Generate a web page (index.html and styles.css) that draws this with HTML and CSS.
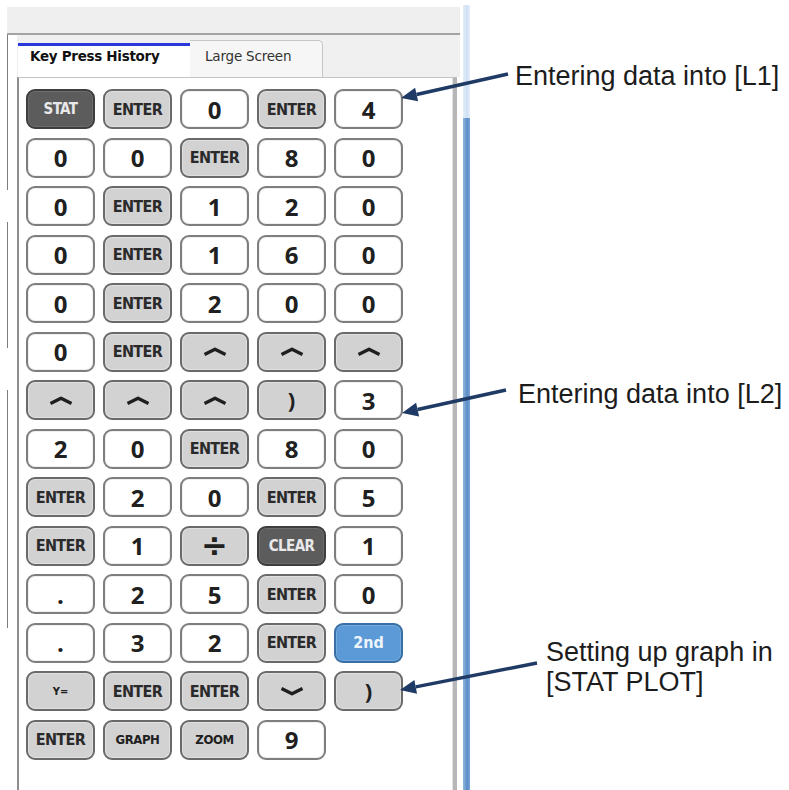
FILE: index.html
```html
<!DOCTYPE html>
<html>
<head>
<meta charset="utf-8">
<link rel="stylesheet" href="styles.css">
</head>
<body>
<div class="page">
  <div class="frame">
    <div class="topbar"></div>
    <div class="body">
      <div class="edge">
        <div class="seg seg-a"></div>
        <div class="gap gap-a"></div>
        <div class="seg seg-b"></div>
        <div class="gap gap-b"></div>
        <div class="seg seg-c"></div>
      </div>
      <div class="main">
        <div class="tabs">
          <div class="tab active">Key Press History</div>
          <div class="tab">Large Screen</div>
        </div>
        <div class="panel">
          <div class="keys">
            <div class="key dark lbl">STAT</div>
            <div class="key gray lbl">ENTER</div>
            <div class="key num">0</div>
            <div class="key gray lbl">ENTER</div>
            <div class="key num">4</div>

            <div class="key num">0</div>
            <div class="key num">0</div>
            <div class="key gray lbl">ENTER</div>
            <div class="key num">8</div>
            <div class="key num">0</div>

            <div class="key num">0</div>
            <div class="key gray lbl">ENTER</div>
            <div class="key num">1</div>
            <div class="key num">2</div>
            <div class="key num">0</div>

            <div class="key num">0</div>
            <div class="key gray lbl">ENTER</div>
            <div class="key num">1</div>
            <div class="key num">6</div>
            <div class="key num">0</div>

            <div class="key num">0</div>
            <div class="key gray lbl">ENTER</div>
            <div class="key num">2</div>
            <div class="key num">0</div>
            <div class="key num">0</div>

            <div class="key num">0</div>
            <div class="key gray lbl">ENTER</div>
            <div class="key gray"><svg class="chev" viewBox="0 0 24 9"><path d="M1.5 7.5 L12 2.2 L22.5 7.5"/></svg></div>
            <div class="key gray"><svg class="chev" viewBox="0 0 24 9"><path d="M1.5 7.5 L12 2.2 L22.5 7.5"/></svg></div>
            <div class="key gray"><svg class="chev" viewBox="0 0 24 9"><path d="M1.5 7.5 L12 2.2 L22.5 7.5"/></svg></div>

            <div class="key gray"><svg class="chev" viewBox="0 0 24 9"><path d="M1.5 7.5 L12 2.2 L22.5 7.5"/></svg></div>
            <div class="key gray"><svg class="chev" viewBox="0 0 24 9"><path d="M1.5 7.5 L12 2.2 L22.5 7.5"/></svg></div>
            <div class="key gray"><svg class="chev" viewBox="0 0 24 9"><path d="M1.5 7.5 L12 2.2 L22.5 7.5"/></svg></div>
            <div class="key gray paren">)</div>
            <div class="key num">3</div>

            <div class="key num">2</div>
            <div class="key num">0</div>
            <div class="key gray lbl">ENTER</div>
            <div class="key num">8</div>
            <div class="key num">0</div>

            <div class="key gray lbl">ENTER</div>
            <div class="key num">2</div>
            <div class="key num">0</div>
            <div class="key gray lbl">ENTER</div>
            <div class="key num">5</div>

            <div class="key gray lbl">ENTER</div>
            <div class="key num">1</div>
            <div class="key gray div">÷</div>
            <div class="key dark lbl">CLEAR</div>
            <div class="key num">1</div>

            <div class="key num">.</div>
            <div class="key num">2</div>
            <div class="key num">5</div>
            <div class="key gray lbl">ENTER</div>
            <div class="key num">0</div>

            <div class="key num">.</div>
            <div class="key num">3</div>
            <div class="key num">2</div>
            <div class="key gray lbl">ENTER</div>
            <div class="key blue second">2nd</div>

            <div class="key gray tiny">Y=</div>
            <div class="key gray lbl">ENTER</div>
            <div class="key gray lbl">ENTER</div>
            <div class="key gray"><svg class="chev" viewBox="0 0 24 9"><path d="M1.5 1.5 L12 6.8 L22.5 1.5"/></svg></div>
            <div class="key gray paren">)</div>

            <div class="key gray lbl">ENTER</div>
            <div class="key gray small">GRAPH</div>
            <div class="key gray small">ZOOM</div>
            <div class="key num">9</div>
          </div>
        </div>
      </div>
    </div>
  </div>
  <div class="scroll"><div class="scroll-top"></div></div>

  <div class="note note-1">Entering data into [L1]</div>
  <div class="note note-2">Entering data into [L2]</div>
  <div class="note note-3">Setting up graph in<br>[STAT PLOT]</div>
  <svg class="arrows" viewBox="0 0 789 790">
    <line x1="508" y1="74" x2="416.6" y2="94.5"/>
    <polygon points="401,98 418.1,101.3 415.1,87.7"/>
    <line x1="506" y1="390" x2="417.6" y2="409.5"/>
    <polygon points="402,413 419.1,416.4 416.1,402.7"/>
    <line x1="537" y1="663" x2="415.7" y2="686.9"/>
    <polygon points="400,690 417.05,693.8 414.35,680"/>
  </svg>
</div>
</body>
</html>
```

FILE: styles.css
```css
html, body {
  margin: 0;
  padding: 0;
  background: #ffffff;
}

.page {
  position: relative;
  width: 789px;
  height: 790px;
  display: flex;
  padding-left: 7px;
  box-sizing: border-box;
  overflow: hidden;
  font-family: "DejaVu Sans", sans-serif;
}

.frame {
  width: 453px;
  margin-top: 7px;
  display: flex;
  flex-direction: column;
}

.topbar {
  height: 26px;
  background: #efefef;
  border-bottom: 2px solid #a3a3a3;
}

.body {
  flex: 1;
  display: flex;
}

.edge {
  width: 10px;
  display: flex;
  flex-direction: column;
}

.seg {
  border-left: 1px solid #7c7c7c;
}

.seg-a { height: 155px; }
.gap-a { height: 32px; }
.seg-b { height: 126px; }
.gap-b { height: 42px; }
.seg-c { height: 238px; }

.main {
  flex: 1;
  display: flex;
  flex-direction: column;
}

.tabs {
  height: 42px;
  background: #f0f0f0;
  display: flex;
  align-items: flex-end;
  padding-left: 1px;
  box-sizing: border-box;
}

.tab {
  font-family: "DejaVu Sans", sans-serif;
  font-size: 13.5px;
  color: #333;
  box-sizing: border-box;
}

.tab.active {
  width: 172px;
  height: 34px;
  background: #ffffff;
  border-top: 3px solid #2a38de;
  font-weight: bold;
  color: #111;
  padding: 2px 0 0 12px;
  letter-spacing: -0.3px;
}

.tab:not(.active) {
  width: 133px;
  height: 37px;
  background: #f6f6f6;
  border: 1px solid #c6c6c6;
  border-bottom: none;
  border-left: none;
  border-top-right-radius: 5px;
  padding: 7px 0 0 15px;
  letter-spacing: -0.2px;
}

.panel {
  flex: 1;
  margin-right: 3px;
  border-top: 1px solid #c4c4c4;
  border-left: 2px solid #8e8e8e;
  border-right: 4px solid #b7b7b7;
  box-shadow: inset -1px 0 0 #e2e2e2;
  padding: 11px 0 0 7px;
  background: #ffffff;
}

.keys {
  display: grid;
  grid-template-columns: repeat(5, 69px);
  grid-auto-rows: 40px;
  column-gap: 8px;
  row-gap: 8.5px;
}

.key {
  box-sizing: border-box;
  border: 2px solid #7e7e7e;
  border-radius: 9px;
  background: #ffffff;
  box-shadow: inset 0 0 0 1px #f0f0f0;
  display: flex;
  align-items: center;
  justify-content: center;
  color: #202020;
}

.key.gray {
  background: #d2d2d2;
  border-color: #6a6a6a;
  box-shadow: inset 0 0 0 1px #e0e0e0;
}

.key.dark {
  background: #5c5c5c;
  border-color: #3e3e3e;
  box-shadow: inset 0 0 0 1px #6c6c6c;
  color: #e9e9e9;
}

.key.blue {
  background: #5b9ad6;
  border-color: #3a6fa6;
  box-shadow: inset 0 0 0 1px #73aadf;
  color: #eef5fc;
}

.num {
  font-family: "Open Sans", sans-serif;
  font-weight: 700;
  font-size: 24px;
}

.lbl {
  font-family: "DejaVu Sans Condensed", "DejaVu Sans", sans-serif;
  font-weight: bold;
  font-size: 16px;
  letter-spacing: -0.6px;
  color: #2a2a2a;
}

.key.dark.lbl {
  font-size: 15px;
  color: #e9e9e9;
}

.small {
  font-family: "DejaVu Sans Condensed", "DejaVu Sans", sans-serif;
  font-weight: bold;
  font-size: 13px;
  letter-spacing: -0.4px;
}

.tiny {
  font-family: "DejaVu Sans Condensed", "DejaVu Sans", sans-serif;
  font-weight: bold;
  font-size: 11px;
}

.second {
  font-family: "DejaVu Sans Condensed", "DejaVu Sans", sans-serif;
  font-weight: bold;
  font-size: 16px;
}

.paren {
  font-family: "Open Sans", sans-serif;
  font-weight: 700;
  font-size: 22px;
  padding-bottom: 2px;
}

.div {
  font-family: "DejaVu Sans", sans-serif;
  font-weight: bold;
  font-size: 32px;
  padding-bottom: 2px;
}

.chev {
  width: 24px;
  height: 9px;
}

.chev path {
  fill: none;
  stroke: #1e1e1e;
  stroke-width: 3.2;
  stroke-linejoin: round;
  stroke-linecap: butt;
}

.scroll {
  width: 7px;
  margin-left: 3px;
  margin-top: 5px;
  background: linear-gradient(to right, #8fb6e0, #5b8cc6 60%, #7aa5d8);
  display: flex;
  flex-direction: column;
}

.scroll-top {
  height: 113px;
  background: linear-gradient(to right, #e3eef9, #cfe0f3 60%, #e6f0fa);
}

.note {
  position: absolute;
  font-family: "Liberation Sans", Arial, sans-serif;
  font-size: 27px;
  line-height: 30px;
  color: #1c1c1c;
  white-space: nowrap;
}

.note-1 { left: 515px; top: 61px; }
.note-2 { left: 518px; top: 379px; }
.note-3 { left: 546px; top: 637px; }

.arrows {
  position: absolute;
  left: 0;
  top: 0;
  width: 789px;
  height: 790px;
  pointer-events: none;
}

.arrows line {
  stroke: #1f3a64;
  stroke-width: 3.5;
}

.arrows polygon {
  fill: #1f3a64;
}
```
